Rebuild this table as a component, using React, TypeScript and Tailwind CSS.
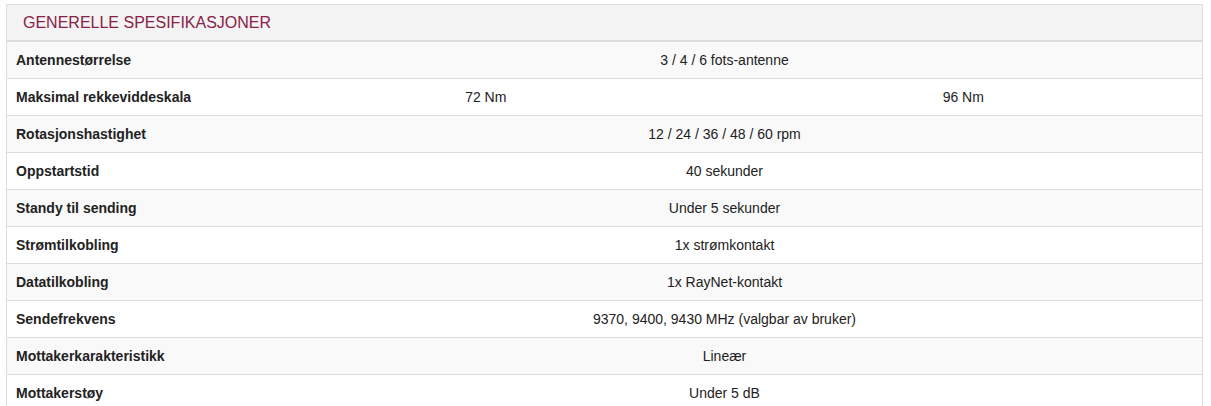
const rows: { label: string; values: string[] }[] = [
  { label: 'Antennestørrelse', values: ['3 / 4 / 6 fots-antenne'] },
  { label: 'Maksimal rekkeviddeskala', values: ['72 Nm', '96 Nm'] },
  { label: 'Rotasjonshastighet', values: ['12 / 24 / 36 / 48 / 60 rpm'] },
  { label: 'Oppstartstid', values: ['40 sekunder'] },
  { label: 'Standy til sending', values: ['Under 5 sekunder'] },
  { label: 'Strømtilkobling', values: ['1x strømkontakt'] },
  { label: 'Datatilkobling', values: ['1x RayNet-kontakt'] },
  { label: 'Sendefrekvens', values: ['9370, 9400, 9430 MHz (valgbar av bruker)'] },
  { label: 'Mottakerkarakteristikk', values: ['Lineær'] },
  { label: 'Mottakerstøy', values: ['Under 5 dB'] },
];

export default function App() {
  return (
    <div className="bg-white pt-[4px] pl-[6px] font-['Liberation_Sans',Arial,sans-serif] text-[#333]">
      <div className="w-[1197px] border border-[#dddddd]">
        {/* Header */}
        <div className="flex h-[37px] items-center border-b-2 border-[#dddddd] bg-[#f3f3f3] px-[16px]">
          <h2 className="text-[16px] text-[#8a2146]">GENERELLE SPESIFIKASJONER</h2>
        </div>

        {rows.map((row, i) => (
          <div
            key={row.label}
            className={`flex h-[37px] items-center border-b border-[#dddddd] text-[14px] ${
              i % 2 === 0 ? 'bg-[#f9f9f9]' : 'bg-white'
            }`}
          >
            <div className="w-[240px] shrink-0 pl-[9px] font-bold text-[#222]">{row.label}</div>
            {row.values.map((v) => (
              <div key={v} className="flex-1 text-center text-[#222]">
                {v}
              </div>
            ))}
          </div>
        ))}
      </div>
    </div>
  );
}
